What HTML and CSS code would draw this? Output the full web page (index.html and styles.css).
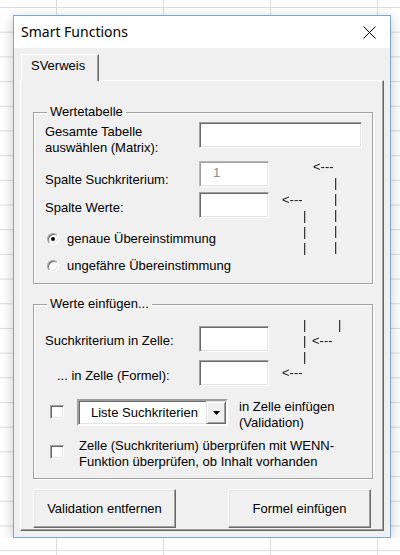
FILE: index.html
```html
<!DOCTYPE html>
<html lang="de">
<head>
<meta charset="utf-8">
<title>Smart Functions</title>
<link rel="stylesheet" href="styles.css">
</head>
<body>
<div class="dialog">
  <div class="titlebar">
    <span class="title">Smart Functions</span>
    <svg class="close" width="13" height="13" viewBox="0 0 13 13"><path d="M0.5 0.5 L12.5 12.5 M12.5 0.5 L0.5 12.5" stroke="#000" stroke-width="1" fill="none"/></svg>
  </div>
  <div class="client">
    <div class="tabs"><div class="tab">SVerweis</div></div>
    <div class="page">
      <div class="frame f1">
        <span class="caption">Wertetabelle</span>
        <div class="row r1"><span class="lbl">Gesamte Tabelle<br>auswählen (Matrix):</span><div class="tb wide"></div></div>
        <div class="row r2"><span class="lbl">Spalte Suchkriterium:</span><div class="tb dis">1</div></div>
        <div class="row r3"><span class="lbl">Spalte Werte:</span><div class="tb"></div></div>
        <div class="opt o1"><span class="radio on"></span>genaue Übereinstimmung</div>
        <div class="opt o2"><span class="radio"></span>ungefähre Übereinstimmung</div>
        <span class="ann a1">&lt;---</span>
        <span class="ann p1">|<br>|<br>|<br>|<br>|</span>
        <span class="ann a2">&lt;---</span>
        <span class="ann p2">|<br>|<br>|</span>
      </div>
      <div class="frame f2">
        <span class="caption">Werte einfügen...</span>
        <div class="row s1"><span class="lbl">Suchkriterium in Zelle:</span><div class="tb"></div></div>
        <div class="row s2"><span class="lbl ind">... in Zelle (Formel):</span><div class="tb"></div></div>
        <div class="row s3">
          <span class="chk"></span>
          <div class="combo"><span class="combo-text">Liste Suchkriterien</span><span class="combo-btn"><svg width="7" height="4" viewBox="0 0 7 4"><polygon points="0,0 7,0 3.5,4" fill="#000"/></svg></span></div>
          <span class="s3-text">in Zelle einfügen<br>(Validation)</span>
        </div>
        <div class="row s4">
          <span class="chk"></span>
          <span class="s4-text">Zelle (Suchkriterium) überprüfen mit WENN-<br>Funktion überprüfen, ob Inhalt vorhanden</span>
        </div>
        <span class="ann p3">|<br>|<br>|</span>
        <span class="ann a3">&lt;---</span>
        <span class="ann p4">|</span>
        <span class="ann a4">&lt;---</span>
      </div>
      <div class="buttons">
        <button class="btn">Validation entfernen</button>
        <button class="btn">Formel einfügen</button>
      </div>
    </div>
  </div>
</div>
</body>
</html>
```
FILE: styles.css
```css
html {
  background-color: #fff;
  background-image:
    linear-gradient(to right, #dcdcdc 1px, transparent 1px),
    linear-gradient(to bottom, #dcdcdc 1px, transparent 1px);
  background-size: 107px 100%, 100% 24.7px;
  background-position: 56px 0, 0 7px;
  height: 100%;
}
body {
  margin: 0;
  font-family: "Liberation Sans", Arial, sans-serif;
  font-size: 13px;
  color: #000;
}
.dialog {
  margin: 15px 0 0 13px;
  width: 378px;
  height: 523px;
  box-sizing: border-box;
  border: 1px solid #7ba7d7;
  box-shadow: 0 3px 12px rgba(0,0,0,0.22);
  display: flex;
  flex-direction: column;
  background: #f0f0f0;
}
.titlebar {
  height: 32px;
  background: #fff;
  display: flex;
  align-items: center;
  justify-content: space-between;
  padding: 0 14px 0 7px;
}
.title {
  font-family: "Noto Sans", "Open Sans", sans-serif;
  font-size: 14px;
  line-height: 20px;
}
.close { display: block; }
.client {
  flex: 1;
  display: flex;
  flex-direction: column;
  padding: 6px;
}
.tabs {
  height: 26px;
  display: flex;
}
.tab {
  position: relative;
  z-index: 1;
  margin-left: 1px;
  width: 78px;
  height: 27px;
  box-sizing: border-box;
  border-top: 1px solid #fff;
  border-left: 1px solid #fff;
  border-right: 1px solid #696969;
  box-shadow: inset -1px 0 0 #a0a0a0;
  background: #f0f0f0;
  padding-left: 9px;
  line-height: 22px;
}
.page {
  flex: 1;
  border: 1px solid;
  border-color: #fff #696969 #696969 #fff;
  box-shadow: inset -1px -1px 0 #a0a0a0;
  padding: 31px 0 0 12px;
}
.frame {
  position: relative;
  width: 340px;
  box-sizing: border-box;
  border: 1px solid #a0a0a0;
  box-shadow: 1px 1px 0 #fff, inset 1px 1px 0 #fff;
  padding-left: 11px;
}
.f1 { padding-top: 9px; padding-bottom: 9px; }
.f2 { margin-top: 20px; padding-top: 21px; padding-bottom: 8px; }
.caption {
  position: absolute;
  top: -9px;
  left: 13px;
  padding: 0 3px;
  background: #f0f0f0;
  line-height: 16px;
}
.row {
  display: flex;
  align-items: flex-start;
}
.lbl {
  width: 154px;
  box-sizing: border-box;
  line-height: 16px;
  flex: none;
}
.tb {
  width: 70px;
  height: 26px;
  box-sizing: border-box;
  border: 1px solid;
  border-color: #a0a0a0 #fff #fff #a0a0a0;
  box-shadow: inset 1px 1px 0 #696969, inset -1px -1px 0 #e3e3e3;
  background: #fff;
  flex: none;
}
.tb.wide { width: 163px; }
.tb.dis {
  border-color: #b9b9b9 #fff #fff #b9b9b9;
  box-shadow: inset 1px 1px 0 #a0a0a0, inset -1px -1px 0 #e3e3e3;
  color: #8c8c8c;
  padding-left: 13px;
  line-height: 22px;
}
.r1 .lbl { margin-top: 2px; }
.r2 { margin-top: 5px; }
.r2 .lbl { margin-top: 11px; }
.r3 { margin-top: 4px; }
.r3 .lbl { margin-top: 8px; }
.opt {
  display: flex;
  align-items: center;
  line-height: 16px;
}
.o1 { margin-top: 13px; }
.o2 { margin-top: 11px; }
.radio {
  position: relative;
  width: 12px;
  height: 12px;
  box-sizing: border-box;
  border-radius: 50%;
  border: 1px solid;
  border-color: #a0a0a0 #fff #fff #a0a0a0;
  box-shadow: inset 1px 1px 0 #696969, inset -1px -1px 0 #e3e3e3;
  background: #fff;
  margin: 0 8px 0 2px;
  flex: none;
}
.radio.on::after {
  content: "";
  position: absolute;
  left: 3px;
  top: 3px;
  width: 4px;
  height: 4px;
  border-radius: 50%;
  background: #000;
}
.ann {
  position: absolute;
  line-height: 16px;
  white-space: nowrap;
  color: #111;
  will-change: transform;
  transform: translateZ(0);
}
.a1 { left: 279px; top: 46px; }
.p1 { left: 300px; top: 62px; }
.a2 { left: 248px; top: 79px; }
.p2 { left: 269px; top: 95px; }
.p3 { left: 269px; top: 12px; }
.a3 { left: 278px; top: 28px; }
.p4 { left: 304px; top: 12px; }
.a4 { left: 248px; top: 60px; }
.s1 .lbl { margin-top: 7px; }
.s2 { margin-top: 8px; }
.s2 .lbl { margin-top: 8px; padding-left: 12px; }
.s3 { margin-top: 13px; }
.s4 { margin-top: 7px; }
.chk {
  width: 14px;
  height: 14px;
  box-sizing: border-box;
  border: 1px solid;
  border-color: #a0a0a0 #fff #fff #a0a0a0;
  box-shadow: inset 1px 1px 0 #696969, inset -1px -1px 0 #e3e3e3;
  background: #fff;
  margin-left: 5px;
  flex: none;
}
.s3 .chk { margin-top: 6px; }
.s4 .chk { margin-top: 7px; }
.combo {
  margin-left: 13px;
  width: 151px;
  height: 27px;
  box-sizing: border-box;
  border: 2px solid;
  border-color: #a0a0a0 #fff #fff #a0a0a0;
  box-shadow: inset 1px 1px 0 #696969, inset -1px -1px 0 #e3e3e3;
  background: #fff;
  display: flex;
  flex: none;
}
.combo-text {
  flex: 1;
  padding-left: 12px;
  line-height: 23px;
}
.combo-btn {
  width: 20px;
  height: 23px;
  box-sizing: border-box;
  border: 1px solid;
  border-color: #e3e3e3 #696969 #696969 #e3e3e3;
  box-shadow: inset 1px 1px 0 #fff, inset -1px -1px 0 #a0a0a0;
  background: #f0f0f0;
  display: flex;
  align-items: center;
  justify-content: center;
}
.combo-btn svg { display: block; }
.s3-text {
  margin-left: 11px;
  line-height: 16px;
}
.s4-text {
  margin-left: 15px;
  line-height: 16px;
}
.buttons {
  margin-top: 10px;
  display: flex;
  gap: 52px;
}
.btn {
  width: 143px;
  height: 39px;
  box-sizing: border-box;
  border: 1px solid;
  border-color: #fff #696969 #696969 #fff;
  box-shadow: inset -1px -1px 0 #a0a0a0, inset 1px 1px 0 #e3e3e3;
  background: #f0f0f0;
  font-family: "Liberation Sans", Arial, sans-serif;
  font-size: 13px;
  color: #000;
  padding: 0;
}
```
